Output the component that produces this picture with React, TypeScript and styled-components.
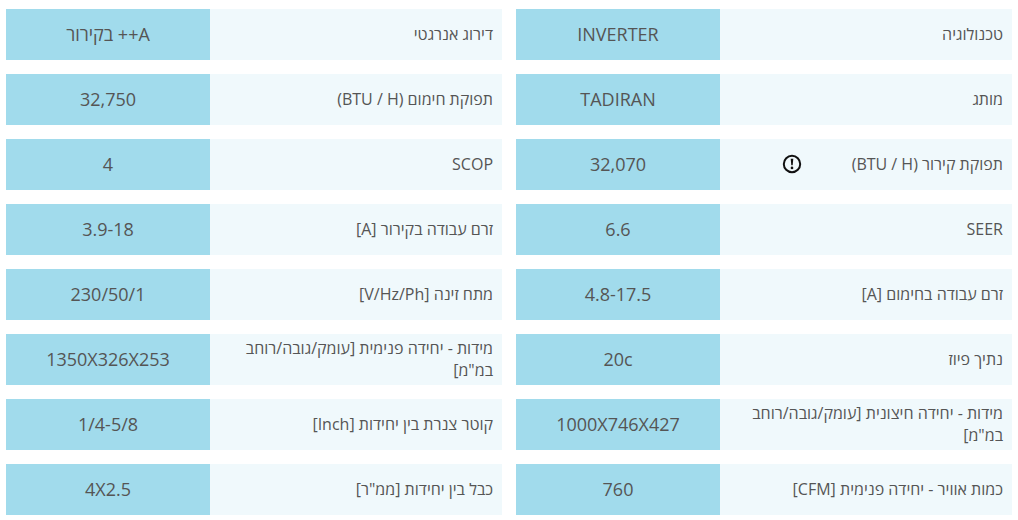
import styled, { createGlobalStyle } from "styled-components";

const GlobalStyle = createGlobalStyle`
  html, body {
    margin: 0;
    padding: 0;
    background: #ffffff;
  }
  body {
    font-family: "Open Sans", "Noto Sans", sans-serif;
    color: #555555;
  }
`;

const Page = styled.div`
  direction: rtl;
  display: grid;
  grid-template-columns: 496px 496px;
  column-gap: 14px;
  padding: 9px 6px;
`;

const SpecTable = styled.div`
  display: flex;
  flex-direction: column;
  gap: 14px;
`;

const SpecRow = styled.div`
  display: flex;
  height: 51px;
`;

const LabelCell = styled.div`
  flex: 0 0 292px;
  box-sizing: border-box;
  display: flex;
  align-items: center;
  justify-content: space-between;
  padding: 0 9px 1px 10px;
  background: #f0f9fc;
  font-size: 16px;
  line-height: 22px;
`;

const ValueCell = styled.div`
  flex: 0 0 204px;
  box-sizing: border-box;
  display: flex;
  align-items: center;
  justify-content: center;
  padding-bottom: 1px;
  background: #a1dbec;
  font-size: 18px;
`;

const InfoIcon = styled.span`
  display: flex;
  margin-left: 52px;
`;

type Spec = { label: string; value: string; info?: boolean };

const rightSpecs: Spec[] = [
  { label: "טכנולוגיה", value: "INVERTER" },
  { label: "מותג", value: "TADIRAN" },
  { label: "תפוקת קירור (BTU / H)", value: "32,070", info: true },
  { label: "SEER", value: "6.6" },
  { label: "זרם עבודה בחימום [A]", value: "4.8-17.5" },
  { label: "נתיך פיוז", value: "20c" },
  { label: 'מידות - יחידה חיצונית [עומק/גובה/רוחב במ"מ]', value: "1000X746X427" },
  { label: "כמות אוויר - יחידה פנימית [CFM]", value: "760" },
];

const leftSpecs: Spec[] = [
  { label: "דירוג אנרגטי", value: "A++ בקירור" },
  { label: "תפוקת חימום (BTU / H)", value: "32,750" },
  { label: "SCOP", value: "4" },
  { label: "זרם עבודה בקירור [A]", value: "3.9-18" },
  { label: "מתח זינה [V/Hz/Ph]", value: "230/50/1" },
  { label: 'מידות - יחידה פנימית [עומק/גובה/רוחב במ"מ]', value: "1350X326X253" },
  { label: "קוטר צנרת בין יחידות [Inch]", value: "1/4-5/8" },
  { label: 'כבל בין יחידות [ממ"ר]', value: "4X2.5" },
];

const AlertIcon = () => (
  <svg width="20" height="20" viewBox="0 0 20 20">
    <circle cx="10" cy="10" r="8.2" fill="none" stroke="#111" strokeWidth="2" />
    <path d="M8.7 4.8 L11.3 4.8 L10.7 11.3 L9.3 11.3 Z" fill="#111" />
    <circle cx="10" cy="13.9" r="1.35" fill="#111" />
  </svg>
);

const SpecList = ({ specs }: { specs: Spec[] }) => (
  <SpecTable>
    {specs.map((spec) => (
      <SpecRow key={spec.label}>
        <LabelCell>
          <span>{spec.label}</span>
          {spec.info && (
            <InfoIcon>
              <AlertIcon />
            </InfoIcon>
          )}
        </LabelCell>
        <ValueCell>{spec.value}</ValueCell>
      </SpecRow>
    ))}
  </SpecTable>
);

export default function App() {
  return (
    <>
      <GlobalStyle />
      <Page>
        <SpecList specs={rightSpecs} />
        <SpecList specs={leftSpecs} />
      </Page>
    </>
  );
}
